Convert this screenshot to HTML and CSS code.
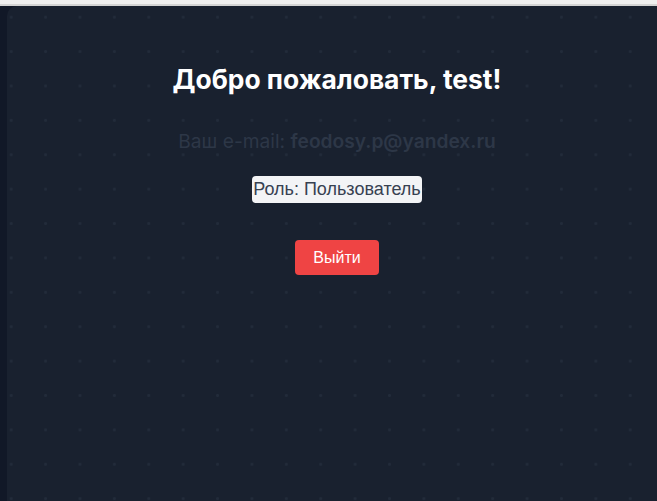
FILE: index.html
```html
<!DOCTYPE html>
<html lang="ru">
<head>
<meta charset="utf-8">
<title>Профиль</title>
<link rel="stylesheet" href="styles.css">
</head>
<body>
<div class="topbar"></div>
<div class="shell">
  <div class="rail"></div>
  <main class="panel">
    <section class="profile">
      <h1 class="title">Добро пожаловать, test!</h1>
      <p class="email">Ваш e-mail: <strong>feodosy.p@yandex.ru</strong></p>
      <span class="role">Роль: Пользователь</span>
      <button class="logout" type="button">Выйти</button>
    </section>
  </main>
</div>
</body>
</html>
```
FILE: styles.css
```css
html, body {
  margin: 0;
  padding: 0;
  height: 100%;
}
body {
  background: #111827;
  display: flex;
  flex-direction: column;
  overflow: hidden;
}
.topbar {
  height: 4px;
  background: #efefef;
  border-bottom: 2px solid #d4d4d4;
  flex: none;
}
.shell {
  flex: 1;
  display: flex;
}
.rail {
  width: 7px;
  flex: none;
  background: #111827;
}
.panel {
  flex: 1;
  background-color: #19212f;
  background-image: radial-gradient(circle, #222b3a 1.3px, transparent 1.6px);
  background-size: 34.4px 34.4px;
  background-position: -13px -6px;
  border-top-left-radius: 10px;
  display: flex;
  justify-content: center;
  padding-left: 10px;
}
.profile {
  display: flex;
  flex-direction: column;
  align-items: center;
  padding-top: 57px;
}
.title {
  margin: 0;
  font-family: Inter, "Noto Sans", sans-serif;
  font-weight: 700;
  font-size: 26.4px;
  line-height: 33px;
  color: #ffffff;
}
.email {
  margin: 31px 0 0;
  font-family: Inter, "Noto Sans", sans-serif;
  font-size: 19.2px;
  line-height: 28px;
  color: #2d3747;
}
.email strong {
  font-weight: 600;
}
.role {
  margin-top: 21px;
  font-family: "Liberation Sans", Arial, sans-serif;
  font-size: 18px;
  line-height: 27px;
  color: #374151;
  background: #f3f4f6;
  border-radius: 4px;
  padding: 0 1px;
}
.logout {
  margin-top: 37px;
  font-family: "Liberation Sans", Arial, sans-serif;
  font-size: 16px;
  line-height: 21px;
  color: #ffffff;
  background: #ef4444;
  border: none;
  border-radius: 4px;
  padding: 7px 18px;
  cursor: pointer;
}
```
